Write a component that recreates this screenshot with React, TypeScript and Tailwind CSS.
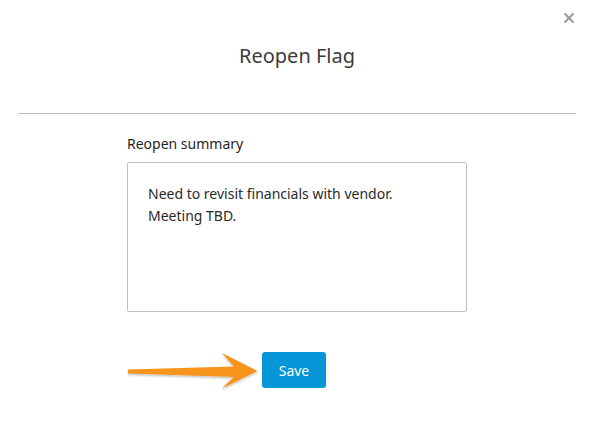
import { useState } from 'react';

export default function App() {
  const [summary, setSummary] = useState('Need to revisit financials with vendor.\nMeeting TBD.');

  return (
    <div className="relative w-full h-[425px] bg-white text-[#3c3c3c]" style={{ fontFamily: '"Noto Sans", "Open Sans", sans-serif' }}>
      {/* Header */}
      <div className="relative h-[114px] ml-[18px] mr-[16px] border-b border-[#bdbdbd] flex items-center justify-center">
        <h2 className="text-[20px] leading-[26px] font-normal text-[#3c3c3c] -mt-[2px]">Reopen Flag</h2>
        <button className="absolute right-[1px] top-[12px] w-[12px] h-[12px] text-[#9a9a9a]" aria-label="Close">
          <svg viewBox="0 0 12 12" className="w-[12px] h-[12px]">
            <path d="M1.5 1.5 L10.5 10.5 M10.5 1.5 L1.5 10.5" stroke="currentColor" strokeWidth="2" />
          </svg>
        </button>
      </div>

      {/* Body */}
      <div className="pl-[127px] pt-[20px]">
        <label className="block text-[14px] leading-[20px] text-[#1f1f1f]">Reopen summary</label>
        <textarea
          value={summary}
          onChange={(e) => setSummary(e.target.value)}
          className="mt-[8px] block w-[340px] h-[150px] resize-none border border-[#bfbfbf] rounded-[2px] p-[20px] text-[14px] leading-[22px] text-[#2a2a2a] outline-none"
        />
        <button className="mt-[40px] ml-[135px] w-[64px] h-[36px] rounded-[3px] bg-[#0696d7] text-white text-[14px]">
          Save
        </button>
      </div>

      {/* Annotation arrow */}
      <svg className="absolute left-0 top-0 pointer-events-none" width="592" height="425" viewBox="0 0 592 425">
        <defs>
          <filter id="sh" x="-10%" y="-30%" width="120%" height="160%">
            <feDropShadow dx="0" dy="1.5" stdDeviation="1.2" floodColor="#000" floodOpacity="0.25" />
          </filter>
        </defs>
        <path
          d="M128 369.5 L234 366.5 Q228 360 222 353 L257.5 371 L222 388.5 Q228 382 234 377 L128 373.5 Z"
          fill="#f7941d"
          filter="url(#sh)"
        />
      </svg>
    </div>
  );
}
